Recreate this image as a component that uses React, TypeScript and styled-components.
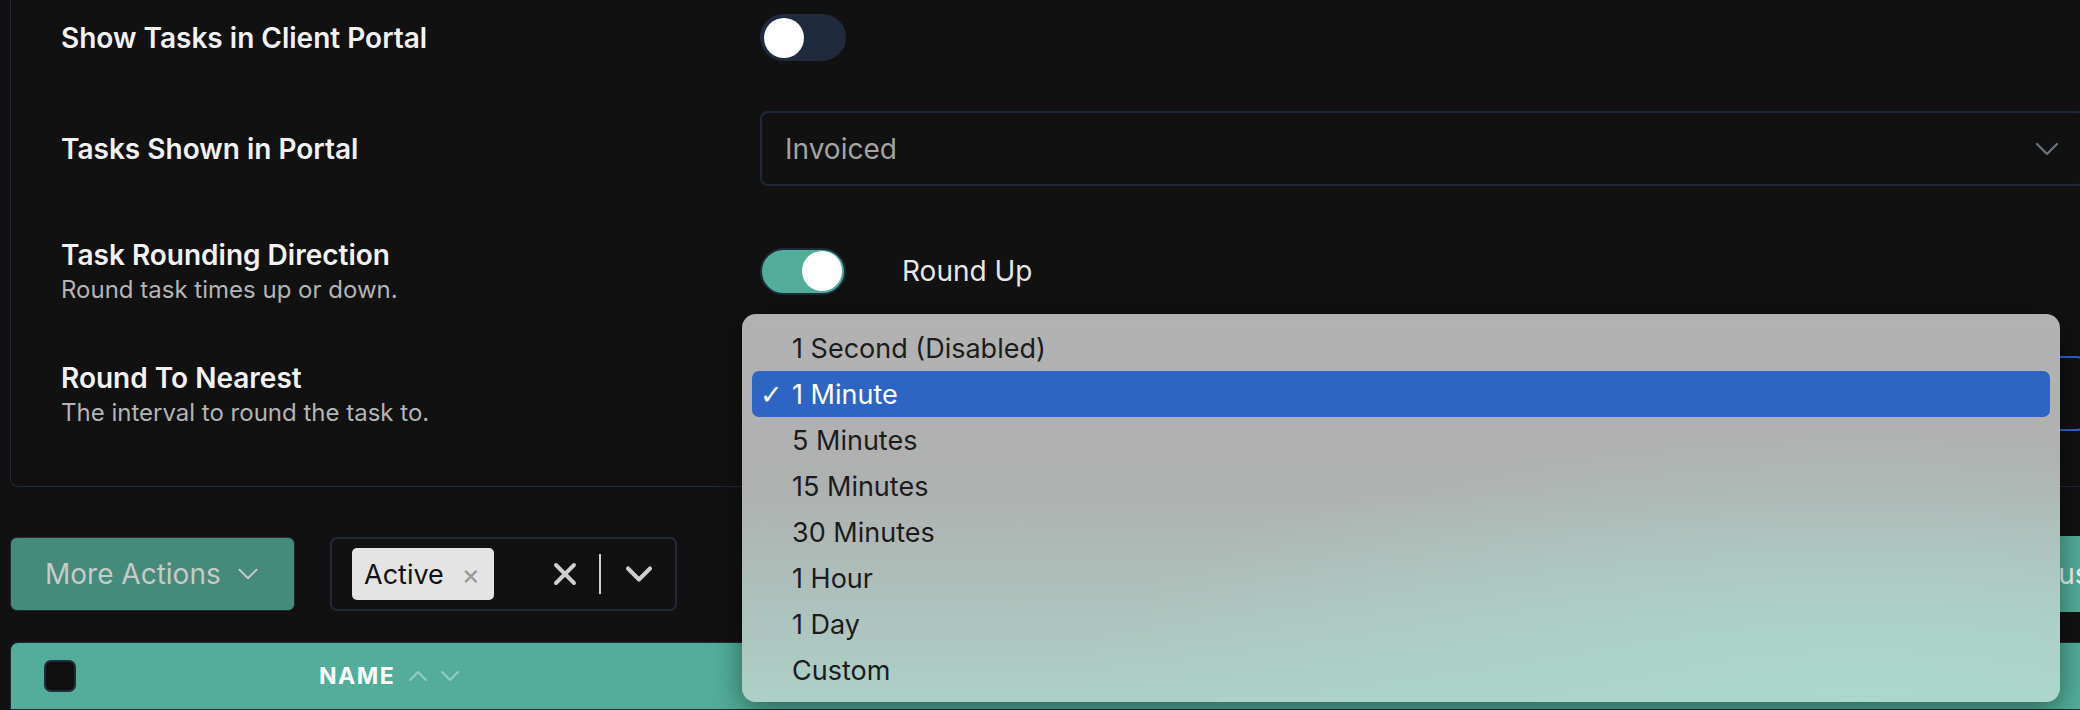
import React from 'react'
import styled, { createGlobalStyle } from 'styled-components'
import { ChevronDown, ChevronUp, X } from 'lucide-react'

const GlobalStyle = createGlobalStyle`
  html, body {
    margin: 0;
    padding: 0;
    background: #111111;
    overflow: hidden;
    font-family: Inter, 'Noto Sans', sans-serif;
  }
`

const Page = styled.div`
  position: relative;
  width: 2140px;
  height: 710px;
  padding-left: 10px;
  box-sizing: border-box;
  display: flex;
  flex-direction: column;
`

const SettingsCard = styled.div`
  border: 1px solid #1f2a3b;
  border-top: none;
  border-radius: 0 0 8px 8px;
  padding: 0 54px 30px 50px;
  display: flex;
  flex-direction: column;
`

const Row = styled.div`
  display: grid;
  grid-template-columns: 699px 1fr;
  align-items: center;
  padding: 25px 0;

  &:first-child {
    padding-top: 14px;
  }
`

const LabelBlock = styled.div`
  display: flex;
  flex-direction: column;
`

const Title = styled.div`
  color: #f2f2f2;
  font-size: 28px;
  font-weight: 600;
  line-height: 38px;
`

const Subtitle = styled.div`
  color: #b4b4b4;
  font-size: 24px;
  line-height: 32px;
`

const ToggleRow = styled.div`
  display: flex;
  align-items: center;
  gap: 56px;
`

const Toggle = styled.div<{ $on?: boolean }>`
  width: 86px;
  height: 47px;
  box-sizing: border-box;
  border-radius: 24px;
  background: ${({ $on }) => ($on ? '#52ae9a' : '#1f2a3c')};
  border: 2px solid #1f2a3c;
  display: flex;
  align-items: center;
  justify-content: ${({ $on }) => ($on ? 'flex-end' : 'flex-start')};
  padding: 0 2px;
`

const Knob = styled.div`
  width: 40px;
  height: 40px;
  border-radius: 50%;
  background: #ffffff;
`

const ToggleText = styled.span`
  color: #e6e6e6;
  font-size: 28px;
`

const Select = styled.div<{ $focused?: boolean }>`
  height: 75px;
  box-sizing: border-box;
  border: ${({ $focused }) => ($focused ? '2px solid #2f62d3' : '2px solid #1e2838')};
  border-radius: 8px;
  display: flex;
  align-items: center;
  justify-content: space-between;
  padding: 0 16px 0 23px;
  color: #a3a3a3;
  font-size: 28px;
`

const Toolbar = styled.div`
  display: flex;
  align-items: center;
  gap: 35px;
  margin-top: 50px;
  height: 74px;
`

const MoreActions = styled.div`
  width: 285px;
  height: 74px;
  box-sizing: border-box;
  background: #458a7b;
  border: 1px solid #1f2a3b;
  border-radius: 7px;
  display: flex;
  align-items: center;
  gap: 10px;
  padding-left: 34px;
  color: #c6cbc8;
  font-size: 28px;
`

const MultiSelect = styled.div`
  width: 347px;
  height: 74px;
  box-sizing: border-box;
  border: 2px solid #1f2a3b;
  border-radius: 7px;
  display: flex;
  align-items: center;
  padding: 0 14px 0 20px;
`

const Chip = styled.div`
  height: 52px;
  width: 142px;
  box-sizing: border-box;
  background: #e4e4e4;
  border-radius: 5px;
  display: flex;
  align-items: center;
  justify-content: space-between;
  padding: 0 14px 0 12px;
  color: #111;
  font-size: 27px;
`

const ChipClose = styled.span`
  color: #9a9a9a;
  font-size: 28px;
  line-height: 1;
`

const Indicators = styled.div`
  margin-left: auto;
  display: flex;
  align-items: center;
  gap: 16px;
  color: #cfcfcf;
`

const Separator = styled.div`
  width: 2px;
  height: 40px;
  background: #cfcfcf;
`

const StatusButton = styled.div`
  margin-left: auto;
  width: 150px;
  height: 76px;
  box-sizing: border-box;
  background: #52ae9a;
  border-radius: 7px;
  display: flex;
  align-items: center;
  padding-left: 26px;
  color: #f4f4f4;
  font-size: 28px;
  margin-right: 10px;
`

const TableHeader = styled.div`
  margin-top: 31px;
  height: 80px;
  box-sizing: border-box;
  background: #52ae9a;
  border: 1px solid #1f2a3b;
  border-radius: 8px 8px 0 0;
  display: flex;
  align-items: center;
  padding-left: 33px;
`

const Checkbox = styled.div`
  width: 32px;
  height: 32px;
  box-sizing: border-box;
  background: #111;
  border: 2px solid #1f2a3b;
  border-radius: 7px;
`

const HeaderCell = styled.div`
  margin-left: 243px;
  display: flex;
  align-items: center;
  color: #ffffff;
  font-size: 23px;
  font-weight: 700;
  letter-spacing: 1.5px;
`

const SortIcons = styled.div`
  display: flex;
  margin-left: 7px;
  color: rgba(255, 255, 255, 0.35);
`

const Menu = styled.div`
  position: absolute;
  left: 742px;
  top: 314px;
  width: 1318px;
  height: 388px;
  box-sizing: border-box;
  border-radius: 14px;
  padding: 11px 10px;
  background:
    radial-gradient(ellipse 60% 70% at 85% 100%, rgba(172, 216, 206, 0.9), rgba(172, 216, 206, 0) 100%),
    linear-gradient(180deg, #b1b2b1 0%, #afb1b0 45%, #acd0c7 100%);
  box-shadow: 0 8px 30px rgba(0, 0, 0, 0.45);
  display: flex;
  flex-direction: column;
`

const MenuItem = styled.div<{ $selected?: boolean }>`
  height: 46px;
  flex-shrink: 0;
  border-radius: 7px;
  display: flex;
  align-items: center;
  padding-left: 40px;
  position: relative;
  font-size: 27px;
  color: ${({ $selected }) => ($selected ? '#ffffff' : '#1c1c1c')};
  background: ${({ $selected }) => ($selected ? '#2e64c3' : 'transparent')};
`

const Check = styled.span`
  position: absolute;
  left: 8px;
  font-size: 27px;
  font-weight: 700;
  font-family: 'DejaVu Sans', sans-serif;
`

const options = ['1 Second (Disabled)', '1 Minute', '5 Minutes', '15 Minutes', '30 Minutes', '1 Hour', '1 Day', 'Custom']

export default function App() {
  const selected = '1 Minute'
  return (
    <>
      <GlobalStyle />
      <Page>
        <SettingsCard>
          <Row>
            <Title>Show Tasks in Client Portal</Title>
            <ToggleRow>
              <Toggle>
                <Knob />
              </Toggle>
            </ToggleRow>
          </Row>
          <Row>
            <Title>Tasks Shown in Portal</Title>
            <Select>
              <span>Invoiced</span>
              <ChevronDown size={40} color="#6b7280" strokeWidth={1.4} />
            </Select>
          </Row>
          <Row>
            <LabelBlock>
              <Title>Task Rounding Direction</Title>
              <Subtitle>Round task times up or down.</Subtitle>
            </LabelBlock>
            <ToggleRow>
              <Toggle $on>
                <Knob />
              </Toggle>
              <ToggleText>Round Up</ToggleText>
            </ToggleRow>
          </Row>
          <Row>
            <LabelBlock>
              <Title>Round To Nearest</Title>
              <Subtitle>The interval to round the task to.</Subtitle>
            </LabelBlock>
            <Select $focused>
              <span>1 Minute</span>
              <ChevronDown size={40} color="#6b7280" strokeWidth={1.4} />
            </Select>
          </Row>
        </SettingsCard>

        <Toolbar>
          <MoreActions>
            More Actions
            <ChevronDown size={34} strokeWidth={1.3} />
          </MoreActions>
          <MultiSelect>
            <Chip>
              Active
              <ChipClose>×</ChipClose>
            </Chip>
            <Indicators>
              <X size={36} strokeWidth={2.6} />
              <Separator />
              <ChevronDown size={44} strokeWidth={2.2} />
            </Indicators>
          </MultiSelect>
          <StatusButton>Status</StatusButton>
        </Toolbar>

        <TableHeader>
          <Checkbox />
          <HeaderCell>
            NAME
            <SortIcons>
              <ChevronUp size={32} strokeWidth={1.8} />
              <ChevronDown size={32} strokeWidth={1.8} />
            </SortIcons>
          </HeaderCell>
        </TableHeader>

        <Menu>
          {options.map((o) => (
            <MenuItem key={o} $selected={o === selected}>
              {o === selected && <Check>✓</Check>}
              {o}
            </MenuItem>
          ))}
        </Menu>
      </Page>
    </>
  )
}
